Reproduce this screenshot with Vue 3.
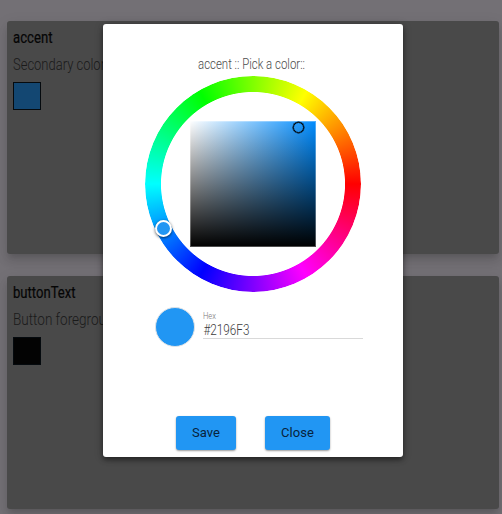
<script setup>
const cards = [
  { name: 'accent', nameWidth: 39.5, text: 'Secondary color', textWidth: 92, color: '#134772' },
  { name: 'buttonText', nameWidth: 62.5, text: 'Button foreground', textWidth: 108, color: '#030303' },
]
</script>

<template>
  <div class="page">
    <section v-for="card in cards" :key="card.name" class="card">
      <svg class="line" height="24">
        <text class="name" x="0" y="16" :textLength="card.nameWidth" lengthAdjust="spacingAndGlyphs">{{ card.name }}</text>
      </svg>
      <svg class="line desc" height="24">
        <text class="info" x="0" y="16" :textLength="card.textWidth" lengthAdjust="spacingAndGlyphs">{{ card.text }}</text>
      </svg>
      <div class="swatch" :style="{ background: card.color }"></div>
    </section>

    <div class="dialog">
      <svg class="title" width="116" height="20">
        <text x="0" y="15" textLength="107" lengthAdjust="spacingAndGlyphs">accent :: Pick a color::</text>
      </svg>
      <div class="wheel">
        <div class="ring"></div>
        <div class="shade"></div>
        <span class="shade-handle"></span>
        <span class="hue-handle"></span>
      </div>
      <div class="value">
        <div class="preview"></div>
        <div class="field">
          <svg width="158" height="30">
            <text class="label" x="0" y="12" textLength="13" lengthAdjust="spacingAndGlyphs">Hex</text>
            <text class="hex" x="0.5" y="28" textLength="46" lengthAdjust="spacingAndGlyphs">#2196F3</text>
          </svg>
        </div>
      </div>
      <div class="actions">
        <button class="save">Save</button>
        <button class="close">Close</button>
      </div>
    </div>
  </div>
</template>

<style>
body {
  background: #737075;
  overflow: hidden;
}
</style>

<style scoped>
.page {
  position: relative;
  box-sizing: border-box;
  width: 502px;
  height: 514px;
  padding: 21px 3px 0 7px;
  overflow: hidden;
  display: flex;
  flex-direction: column;
  gap: 22px;
  font-family: Roboto, "Liberation Sans", sans-serif;
}
.card {
  box-sizing: border-box;
  flex: none;
  height: 233px;
  padding: 6px;
  border-radius: 3px;
  background: #494949;
  box-shadow: 0 5px 5px -3px rgba(0, 0, 0, 0.12), 0 8px 10px 1px rgba(0, 0, 0, 0.08), 0 3px 14px 2px rgba(0, 0, 0, 0.06);
}
.line {
  display: block;
  width: 200px;
}
.desc {
  margin-top: 3px;
}
.name {
  font-size: 16px;
  font-weight: 400;
  fill: #050505;
  stroke: #050505;
  stroke-width: 0.2px;
}
.info {
  font-size: 16px;
  font-weight: 300;
  fill: #1a1a1a;
}
.swatch {
  box-sizing: border-box;
  width: 28px;
  height: 28px;
  margin-top: 4px;
  border: 1px solid #050a0e;
}
.dialog {
  position: absolute;
  left: 103px;
  top: 24px;
  box-sizing: border-box;
  width: 300px;
  height: 433px;
  padding-top: 30px;
  border-radius: 3px;
  background: #fff;
  box-shadow: 0 3px 5px rgba(0, 0, 0, 0.4), 0 1px 10px rgba(0, 0, 0, 0.2);
}
.title {
  display: block;
  margin-left: 95px;
  overflow: visible;
  font-size: 14px;
  font-weight: 300;
  fill: #4c4c4c;
}
.wheel {
  position: relative;
  display: grid;
  place-items: center;
  width: 216px;
  height: 216px;
  margin: 2px 0 0 42px;
}
.ring,
.shade {
  grid-area: 1 / 1;
}
.ring {
  width: 216px;
  height: 216px;
  border-radius: 50%;
  background: conic-gradient(from 90deg, #f00, #f0f, #00f, #0ff, #0f0, #ff0, #f00);
  mask: radial-gradient(circle, transparent 91.6px, #000 92.4px);
}
.shade {
  box-sizing: border-box;
  width: 126px;
  height: 126px;
  border: 1px solid rgba(255, 255, 255, 0.3);
  background: linear-gradient(to top, #000, transparent), linear-gradient(to right, #fff, #008cff);
  background-origin: border-box;
}
.shade-handle,
.hue-handle {
  position: absolute;
  box-sizing: border-box;
  border-radius: 50%;
}
.shade-handle {
  left: 148px;
  top: 46px;
  width: 11px;
  height: 11px;
  box-shadow: 0 0 0 0.5px #000;
  border: 1px solid #000;
}
.hue-handle {
  left: 10px;
  top: 144px;
  width: 17px;
  height: 17px;
  border: 2px solid #fff;
  background: #2196f3;
  box-shadow: 0 1px 3px rgba(0, 0, 0, 0.65);
}
.value {
  display: flex;
  gap: 8px;
  margin: 15px 0 0 52px;
}
.preview {
  box-sizing: border-box;
  width: 40px;
  height: 40px;
  border: 1px solid #e0e3e6;
  border-radius: 50%;
  background: #2196f3;
}
.field {
  width: 160px;
  height: 31px;
  border-bottom: 1px solid #d9d9d9;
}
.field svg {
  display: block;
  overflow: visible;
}
.label {
  font-size: 9px;
  font-weight: 300;
  fill: #777;
}
.hex {
  font-size: 14px;
  font-weight: 300;
  fill: #3c3c3c;
}
.actions {
  display: flex;
  gap: 29px;
  margin: 69px 0 0 73px;
}
button {
  height: 34px;
  padding: 0;
  border: 0;
  border-radius: 3px;
  background: #2196f3;
  box-shadow: 0 1px 2px rgba(0, 0, 0, 0.4);
  color: #08233b;
  font: 400 13px/34px Roboto, "Liberation Sans", sans-serif;
  letter-spacing: 0.1px;
}
.save {
  width: 60px;
}
.close {
  width: 65px;
}
</style>
